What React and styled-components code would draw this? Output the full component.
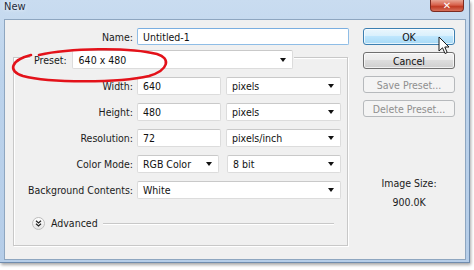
import React from "react";
import styled, { createGlobalStyle } from "styled-components";

const GlobalStyle = createGlobalStyle`
  html, body { margin: 0; padding: 0; background: #ffffff; }
  body { font-family: "DejaVu Sans Condensed", "Liberation Sans", sans-serif; font-size: 10.5px; color: #1b1b1b; }
  * { box-sizing: border-box; }
`;

const Stage = styled.div`
  position: relative;
  width: 474px;
  height: 270px;
  overflow: hidden;
  background: #ffffff;
`;

const Window = styled.div`
  width: 470px;
  height: 263px;
  display: flex;
  flex-direction: column;
  background: linear-gradient(180deg, #c9dcf0 0%, #bcd3ec 30%, #b5cde8 100%);
  border-right: 1px solid #6f8cae;
  border-bottom: 1px solid #6f8cae;
  box-shadow: 1px 2px 3px rgba(0, 0, 0, 0.35);
`;

const TitleBar = styled.div`
  height: 19px;
  display: flex;
  justify-content: space-between;
  align-items: flex-start;
  padding-left: 4px;
`;

const Title = styled.span`
  font-size: 11px;
  line-height: 14px;
  color: #1e2a3a;
  text-shadow: 0 0 4px rgba(255, 255, 255, 0.9);
`;

const CloseButton = styled.div`
  width: 34px;
  height: 12px;
  margin-right: 5px;
  display: flex;
  align-items: center;
  justify-content: center;
  background: linear-gradient(180deg, #e8a493 0%, #d8624c 45%, #c13b24 60%, #d7705a 100%);
  border: 1px solid #7c2b21;
  border-top: none;
  border-radius: 0 0 4px 4px;
  color: #ffffff;
  font-weight: bold;
  font-size: 10px;
  line-height: 10px;
  font-family: "DejaVu Sans", sans-serif;
`;

const Client = styled.div`
  flex: 1;
  margin: 0 3px 2px 4px;
  display: flex;
  background: #f0f0f0;
  border: 1px solid #8ea6c0;
`;

const LeftPane = styled.div`
  width: 344px;
  padding-top: 8px;
  display: flex;
  flex-direction: column;
`;

const NameRow = styled.div`
  display: grid;
  grid-template-columns: 128px 212px;
  column-gap: 4px;
  align-items: center;
`;

const Label = styled.span`
  text-align: right;
  white-space: nowrap;
  color: #1b1b1b;
`;

const TextBox = styled.div`
  height: ${(p) => p.$h || 18}px;
  width: ${(p) => (p.$w ? p.$w + "px" : "auto")};
  display: flex;
  align-items: center;
  padding-left: ${(p) => p.$pad || 5}px;
  background: #ffffff;
  border: 1px solid ${(p) => (p.$focused ? "#8fbde6" : "#dcdcdc")};
  border-top-color: ${(p) => (p.$focused ? "#7aaee0" : "#c9c9c9")};
  border-radius: 2px;
  color: #111;
  white-space: nowrap;
`;

const SelectBox = styled(TextBox)`
  justify-content: space-between;
  padding-right: 6px;
`;

const Arrow = styled.span`
  width: 0;
  height: 0;
  border-left: 3.5px solid transparent;
  border-right: 3.5px solid transparent;
  border-top: 4px solid #111;
`;

const GroupBox = styled.div`
  margin-top: 12px;
  margin-left: 8px;
  width: 335px;
  height: 189px;
  border: 1px solid #c8c8c8;
  box-shadow: inset 1px 1px 0 #ffffff, 1px 1px 0 #ffffff;
  display: flex;
  flex-direction: column;
`;

const Header = styled.div`
  align-self: flex-start;
  margin-top: -8px;
  margin-left: 16px;
  padding: 0 1px 0 4px;
  display: flex;
  align-items: center;
  gap: 5px;
  background: #f0f0f0;
`;

const Rows = styled.div`
  margin-top: 8px;
  display: flex;
  flex-direction: column;
  gap: 8px;
`;

const Row = styled.div`
  display: flex;
  align-items: center;
`;

const RowLabel = styled(Label)`
  width: 119px;
  margin-right: 4px;
`;

const Spacer = styled.div`
  width: ${(p) => p.$w}px;
  flex: none;
`;

const AdvancedRow = styled.div`
  margin-top: 17px;
  margin-left: 18px;
  margin-right: 13px;
  height: 14px;
  display: flex;
  align-items: center;
`;

const RoundIcon = styled.div`
  width: 13px;
  height: 13px;
  border-radius: 50%;
  border: 1px solid #bdbdbd;
  background: linear-gradient(180deg, #ffffff, #e4e4e4);
  display: flex;
  align-items: center;
  justify-content: center;
  margin-right: 6px;
`;

const Rule = styled.div`
  flex: 1;
  height: 1px;
  margin-left: 5px;
  background: #c8c8c8;
  box-shadow: 0 1px 0 #ffffff;
`;

const RightPane = styled.div`
  flex: 1;
  padding-top: 8px;
  padding-left: 4px;
  display: flex;
  flex-direction: column;
  align-items: center;
  gap: 7px;
`;

const Button = styled.div`
  width: 92px;
  height: 17px;
  display: flex;
  align-items: center;
  justify-content: center;
  border-radius: 3px;
  border: 1px solid ${(p) => (p.$primary ? "#3c7fb1" : p.$disabled ? "#b6b9bc" : "#707070")};
  background: ${(p) =>
    p.$primary
      ? "linear-gradient(180deg, #eaf6fd 0%, #d9f0fc 45%, #bee6fd 50%, #a7d9f5 100%)"
      : p.$disabled
      ? "#f4f4f4"
      : "linear-gradient(180deg, #f2f2f2 0%, #ebebeb 45%, #dddddd 50%, #cfcfcf 100%)"};
  box-shadow: inset 0 0 0 1px ${(p) => (p.$disabled ? "transparent" : "rgba(255,255,255,0.7)")};
  color: ${(p) => (p.$disabled ? "#8f8f8f" : "#111")};
  white-space: nowrap;
`;

const Info = styled.div`
  line-height: 14px;
  color: #1b1b1b;
  margin-top: ${(p) => p.$mt}px;
`;

const Overlay = styled.svg`
  position: absolute;
  left: ${(p) => p.$x}px;
  top: ${(p) => p.$y}px;
  pointer-events: none;
`;

export default function App() {
  return (
    <>
      <GlobalStyle />
      <Stage>
        <Window>
          <TitleBar>
            <Title>New</Title>
            <CloseButton>✕</CloseButton>
          </TitleBar>
          <Client>
            <LeftPane>
              <NameRow>
                <Label>Name:</Label>
                <TextBox $h={17} $focused>Untitled-1</TextBox>
              </NameRow>
              <GroupBox>
                <Header>
                  <Label>Preset:</Label>
                  <SelectBox $w={221} $h={19} $pad={6}>
                    640 x 480
                    <Arrow />
                  </SelectBox>
                </Header>
                <Rows>
                  <Row>
                    <RowLabel>Width:</RowLabel>
                    <TextBox $w={84}>640</TextBox>
                    <Spacer $w={5} />
                    <SelectBox $w={115}>pixels<Arrow /></SelectBox>
                  </Row>
                  <Row>
                    <RowLabel>Height:</RowLabel>
                    <TextBox $w={84}>480</TextBox>
                    <Spacer $w={5} />
                    <SelectBox $w={115}>pixels<Arrow /></SelectBox>
                  </Row>
                  <Row>
                    <RowLabel>Resolution:</RowLabel>
                    <TextBox $w={84}>72</TextBox>
                    <Spacer $w={5} />
                    <SelectBox $w={115}>pixels/inch<Arrow /></SelectBox>
                  </Row>
                  <Row>
                    <RowLabel>Color Mode:</RowLabel>
                    <SelectBox $w={82}>RGB Color<Arrow /></SelectBox>
                    <Spacer $w={8} />
                    <SelectBox $w={114}>8 bit<Arrow /></SelectBox>
                  </Row>
                  <Row>
                    <RowLabel>Background Contents:</RowLabel>
                    <SelectBox $w={204}>White<Arrow /></SelectBox>
                  </Row>
                </Rows>
                <AdvancedRow>
                  <RoundIcon>
                    <svg width="7" height="7" viewBox="0 0 7 7">
                      <path d="M1 0.8 L3.5 3 L6 0.8 M1 3.8 L3.5 6 L6 3.8" fill="none" stroke="#222" strokeWidth="1.2" />
                    </svg>
                  </RoundIcon>
                  <Label>Advanced</Label>
                  <Rule />
                </AdvancedRow>
              </GroupBox>
            </LeftPane>
            <RightPane>
              <Button $primary>OK</Button>
              <Button>Cancel</Button>
              <Button $disabled>Save Preset...</Button>
              <Button $disabled>Delete Preset...</Button>
              <Info $mt={52}>Image Size:</Info>
              <Info $mt={-2}>900.0K</Info>
            </RightPane>
          </Client>
        </Window>
        <Overlay $x={9} $y={46} width="162" height="38" viewBox="0 0 162 38">
          <path
            d="M30 9 C 60 2, 120 1, 148 8 C 162 12, 160 24, 140 30 C 110 37, 40 37, 14 30 C -2 25, 2 14, 22 9"
            fill="none"
            stroke="#e3121a"
            strokeWidth="2.6"
            strokeLinecap="round"
          />
        </Overlay>
        <Overlay $x={438} $y={36} width="14" height="20" viewBox="0 0 14 20">
          <path
            d="M1 1 L1 15 L4.5 11.8 L7 17.5 L9.2 16.5 L6.8 11 L11 11 Z"
            fill="#ffffff"
            stroke="#1a1a1a"
            strokeWidth="1"
            strokeLinejoin="round"
          />
        </Overlay>
      </Stage>
    </>
  );
}
